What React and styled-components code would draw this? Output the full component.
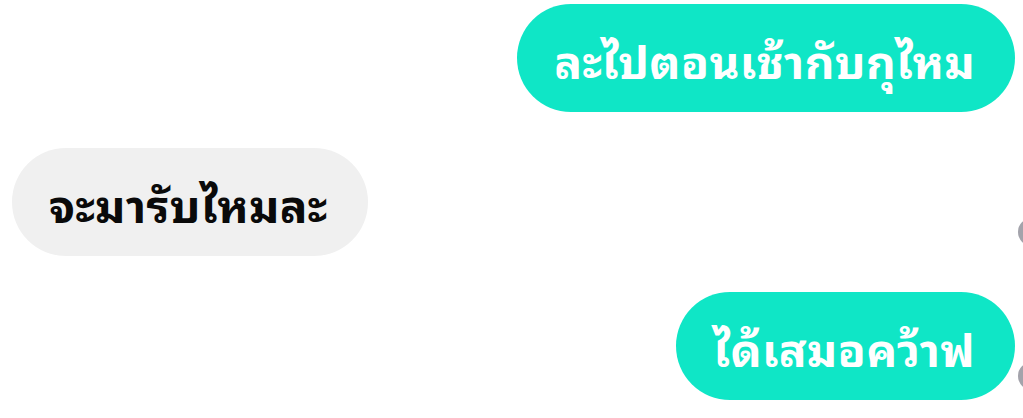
import React from "react";
import styled, { createGlobalStyle } from "styled-components";

const Global = createGlobalStyle`
  html, body { margin: 0; padding: 0; background: #ffffff; overflow: hidden; }
  body { font-family: "Noto Sans Thai Looped", "Noto Sans", sans-serif; }
`;

const Chat = styled.div`
  width: 1060px;
  padding: 4px 0 0 12px;
  display: flex;
  flex-direction: column;
  gap: 36px;
`;

const Row = styled.div`
  display: flex;
  align-items: flex-end;
  gap: 3px;
`;

const Lane = styled.div`
  width: 1003px;
  display: flex;
  justify-content: ${(p) => (p.$mine ? "flex-end" : "flex-start")};
`;

const Bubble = styled.div`
  height: 108px;
  box-sizing: border-box;
  padding: 0 40px 0 37px;
  border-radius: 54px;
  display: flex;
  align-items: center;
  background: ${(p) => (p.$mine ? "#0fe6c6" : "#f0f0f0")};
  color: ${(p) => (p.$mine ? "#ffffff" : "#0a0a0a")};
  font-size: 46px;
  font-weight: 700;
  letter-spacing: 0.3px;
  white-space: nowrap;
`;

const AvatarSlot = styled.div`
  width: 28px;
  height: 28px;
  margin-bottom: 10px;
  border-radius: 50%;
  background: ${(p) => (p.$show ? "#a3a3ab" : "transparent")};
  flex-shrink: 0;
`;

const messages = [
  { text: "ละไปตอนเช้ากับกุไหม", mine: true, avatar: false },
  { text: "จะมารับไหมละ", mine: false, avatar: true },
  { text: "ได้เสมอคว้าฟ", mine: true, avatar: true },
];

export default function App() {
  return (
    <>
      <Global />
      <Chat>
        {messages.map((m, i) => (
          <Row key={i}>
            <Lane $mine={m.mine}>
              <Bubble $mine={m.mine}>{m.text}</Bubble>
            </Lane>
            <AvatarSlot $show={m.avatar} />
          </Row>
        ))}
      </Chat>
    </>
  );
}
